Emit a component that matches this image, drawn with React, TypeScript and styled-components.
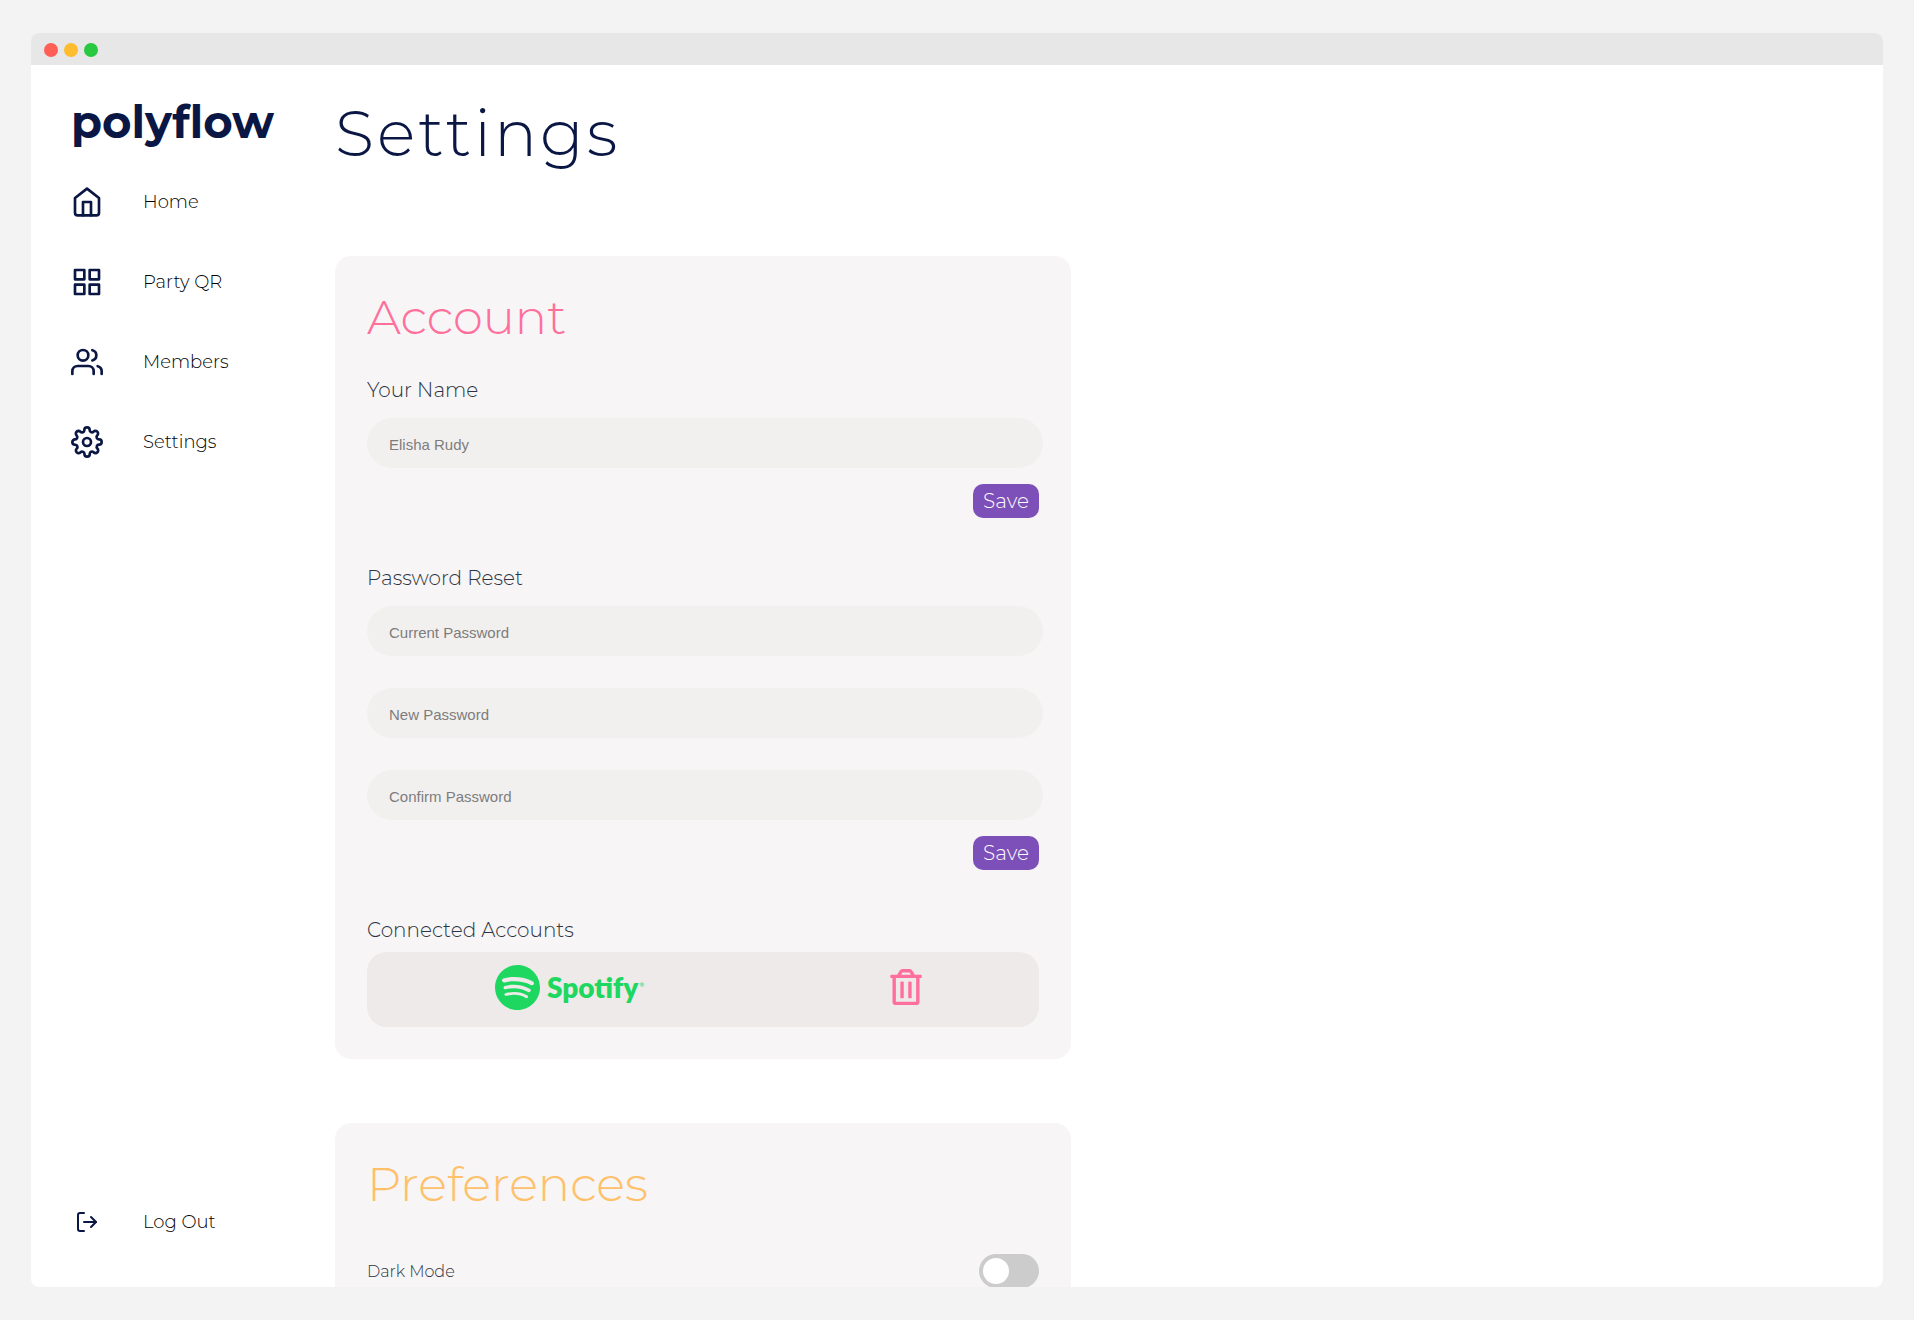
import React from "react";
import styled, { createGlobalStyle } from "styled-components";
import { FiGrid, FiHome, FiLogOut, FiSettings, FiUsers } from "react-icons/fi";
import { FaRegTrashAlt } from "react-icons/fa";
import { SiSpotify } from "react-icons/si";

const NAVY = "#0a1744";

const GlobalStyle = createGlobalStyle`
  * { box-sizing: border-box; }
  body {
    margin: 0;
    background: #f3f3f3;
    color: #2b3442;
    font-family: Montserrat, Inter, "Liberation Sans", sans-serif;
  }
  h1, h2, p { margin: 0; }
`;

const Desktop = styled.div`
  height: 100vh;
  padding: 33px 31px;
`;

const Window = styled.div`
  display: flex;
  flex-direction: column;
  height: 100%;
  overflow: hidden;
  border-radius: 8px;
  background: #fff;
`;

const TitleBar = styled.div`
  display: flex;
  flex: none;
  align-items: center;
  gap: 6px;
  height: 32px;
  padding: 2px 13px 0;
  background: #e7e7e7;
`;

const Light = styled.span<{ $color: string }>`
  width: 14px;
  height: 14px;
  border-radius: 50%;
  background: ${(p) => p.$color};
`;

const Layout = styled.div`
  display: flex;
  flex: 1;
  min-height: 0;
`;

const Sidebar = styled.aside`
  display: flex;
  flex: none;
  flex-direction: column;
  width: 304px;
  padding: 24px 24px 49px 40px;
`;

const Brand = styled.a`
  color: ${NAVY};
  font-size: 45px;
  font-weight: 700;
  line-height: 66px;
  text-decoration: none;
`;

const Nav = styled.nav`
  display: flex;
  flex: 1;
  flex-direction: column;
  gap: 48px;
  padding-top: 31px;
`;

const NavLink = styled.a<{ $last?: boolean }>`
  display: flex;
  align-items: center;
  gap: 40px;
  height: 32px;
  margin-top: ${(p) => (p.$last ? "auto" : "0")};
  color: #000;
  font-size: 18px;
  font-weight: 300;
  text-decoration: none;
`;

const NavIcon = styled.span`
  display: flex;
  justify-content: center;
  width: 32px;
  color: ${NAVY};
`;

const Main = styled.main`
  flex: 1;
  min-width: 0;
  padding: 28px 32px 64px 0;
  overflow-y: auto;
  scrollbar-width: none;
`;

const PageTitle = styled.h1`
  margin-bottom: 83px;
  color: ${NAVY};
  font-size: 64px;
  font-weight: 300;
  letter-spacing: 3px;
  line-height: 80px;
`;

const Card = styled.section`
  max-width: 736px;
  margin-bottom: 64px;
  padding: 32px;
  border-radius: 16px;
  background: #f7f5f6;
`;

const CardTitle = styled.h2<{ $color: string }>`
  color: ${(p) => p.$color};
  font-size: 48px;
  font-weight: 300;
  line-height: 58px;
`;

const Form = styled.form`
  display: flex;
  flex-direction: column;
  gap: 16px;
  padding: 32px 0 16px;
`;

const GroupLabel = styled.label`
  font-size: 20px;
  font-weight: 300;
  line-height: 24px;
`;

const GroupText = styled.p`
  font-size: 20px;
  font-weight: 300;
  line-height: 24px;
`;

const Fields = styled.div`
  display: flex;
  flex-direction: column;
  gap: 32px;
  margin-right: -4px;
`;

const Field = styled.input`
  width: 100%;
  height: 50px;
  padding: 2px 22px 0;
  border: 0;
  border-radius: 25px;
  background: #f2f0ef;
  color: #333;
  font-family: Arial, "Liberation Sans", sans-serif;
  font-size: 15px;

  &::placeholder {
    color: #7d7d7d;
    opacity: 1;
  }
`;

const SaveButton = styled.button`
  align-self: flex-end;
  width: 66px;
  height: 34px;
  padding: 0;
  border: 0;
  border-radius: 10px;
  background: #7d4fb8;
  color: #fff;
  font-family: inherit;
  font-size: 20px;
  font-weight: 300;
  cursor: pointer;
`;

const Connections = styled.div`
  display: flex;
  flex-direction: column;
  gap: 10px;
  padding-top: 32px;
`;

const Connection = styled.div`
  display: flex;
  align-items: center;
  justify-content: space-between;
  height: 75px;
  padding: 0 115px 5px 128px;
  border-radius: 20px;
  background: #edeae9;
`;

const Service = styled.span`
  display: flex;
  align-items: center;
  gap: 7px;
  color: #1ed760;
  font-family: Lato, "Liberation Sans", sans-serif;
  font-size: 28px;
  font-weight: 800;
  line-height: 45px;

  small {
    align-self: flex-start;
    margin: 12px 0 0 -6px;
    font-size: 6px;
    font-weight: 400;
    line-height: 16px;
  }
`;

const RemoveButton = styled.button`
  display: flex;
  padding: 0;
  border: 0;
  background: none;
  color: #ff6f9b;
  cursor: pointer;
`;

const Preference = styled.label`
  display: flex;
  align-items: center;
  justify-content: space-between;
  padding-top: 41px;
  font-size: 16px;
  font-weight: 300;
`;

const Switch = styled.input`
  appearance: none;
  width: 60px;
  height: 34px;
  margin: 0;
  padding: 4px;
  border-radius: 17px;
  background: #ccc;
  cursor: pointer;

  &::before {
    content: "";
    display: block;
    width: 26px;
    height: 26px;
    border-radius: 50%;
    background: #fff;
  }

  &:checked {
    background: #7d4fb8;
  }

  &:checked::before {
    margin-left: auto;
  }
`;

const links = [
  { label: "Home", Icon: FiHome },
  { label: "Party QR", Icon: FiGrid },
  { label: "Members", Icon: FiUsers },
  { label: "Settings", Icon: FiSettings },
];

const passwordFields = ["Current Password", "New Password", "Confirm Password"];

const stop = (event: React.FormEvent) => event.preventDefault();

export default function App() {
  return (
    <>
      <GlobalStyle />
      <Desktop>
        <Window>
          <TitleBar>
            <Light $color="#ff5f57" />
            <Light $color="#febc2e" />
            <Light $color="#28c840" />
          </TitleBar>
          <Layout>
            <Sidebar>
              <Brand href="#home">polyflow</Brand>
              <Nav>
                {links.map(({ label, Icon }) => (
                  <NavLink key={label} href="#">
                    <NavIcon>
                      <Icon size={32} />
                    </NavIcon>
                    {label}
                  </NavLink>
                ))}
                <NavLink href="#" $last>
                  <NavIcon>
                    <FiLogOut size={24} />
                  </NavIcon>
                  Log Out
                </NavLink>
              </Nav>
            </Sidebar>
            <Main>
              <PageTitle>Settings</PageTitle>
              <Card>
                <CardTitle $color="#ff6f9b">Account</CardTitle>
                <Form onSubmit={stop}>
                  <GroupLabel htmlFor="name">Your Name</GroupLabel>
                  <Fields>
                    <Field id="name" type="text" placeholder="Elisha Rudy" />
                  </Fields>
                  <SaveButton type="submit">Save</SaveButton>
                </Form>
                <Form onSubmit={stop}>
                  <GroupLabel htmlFor="password-0">Password Reset</GroupLabel>
                  <Fields>
                    {passwordFields.map((name, i) => (
                      <Field
                        key={name}
                        id={`password-${i}`}
                        type="password"
                        placeholder={name}
                        aria-label={name}
                      />
                    ))}
                  </Fields>
                  <SaveButton type="submit">Save</SaveButton>
                </Form>
                <Connections>
                  <GroupText>Connected Accounts</GroupText>
                  <Connection>
                    <Service>
                      <SiSpotify size={45} />
                      Spotify
                      <small>®</small>
                    </Service>
                    <RemoveButton type="button" aria-label="Remove Spotify">
                      <FaRegTrashAlt size={36} />
                    </RemoveButton>
                  </Connection>
                </Connections>
              </Card>
              <Card>
                <CardTitle $color="#ffc06a">Preferences</CardTitle>
                <Preference>
                  Dark Mode
                  <Switch type="checkbox" role="switch" />
                </Preference>
              </Card>
            </Main>
          </Layout>
        </Window>
      </Desktop>
    </>
  );
}
